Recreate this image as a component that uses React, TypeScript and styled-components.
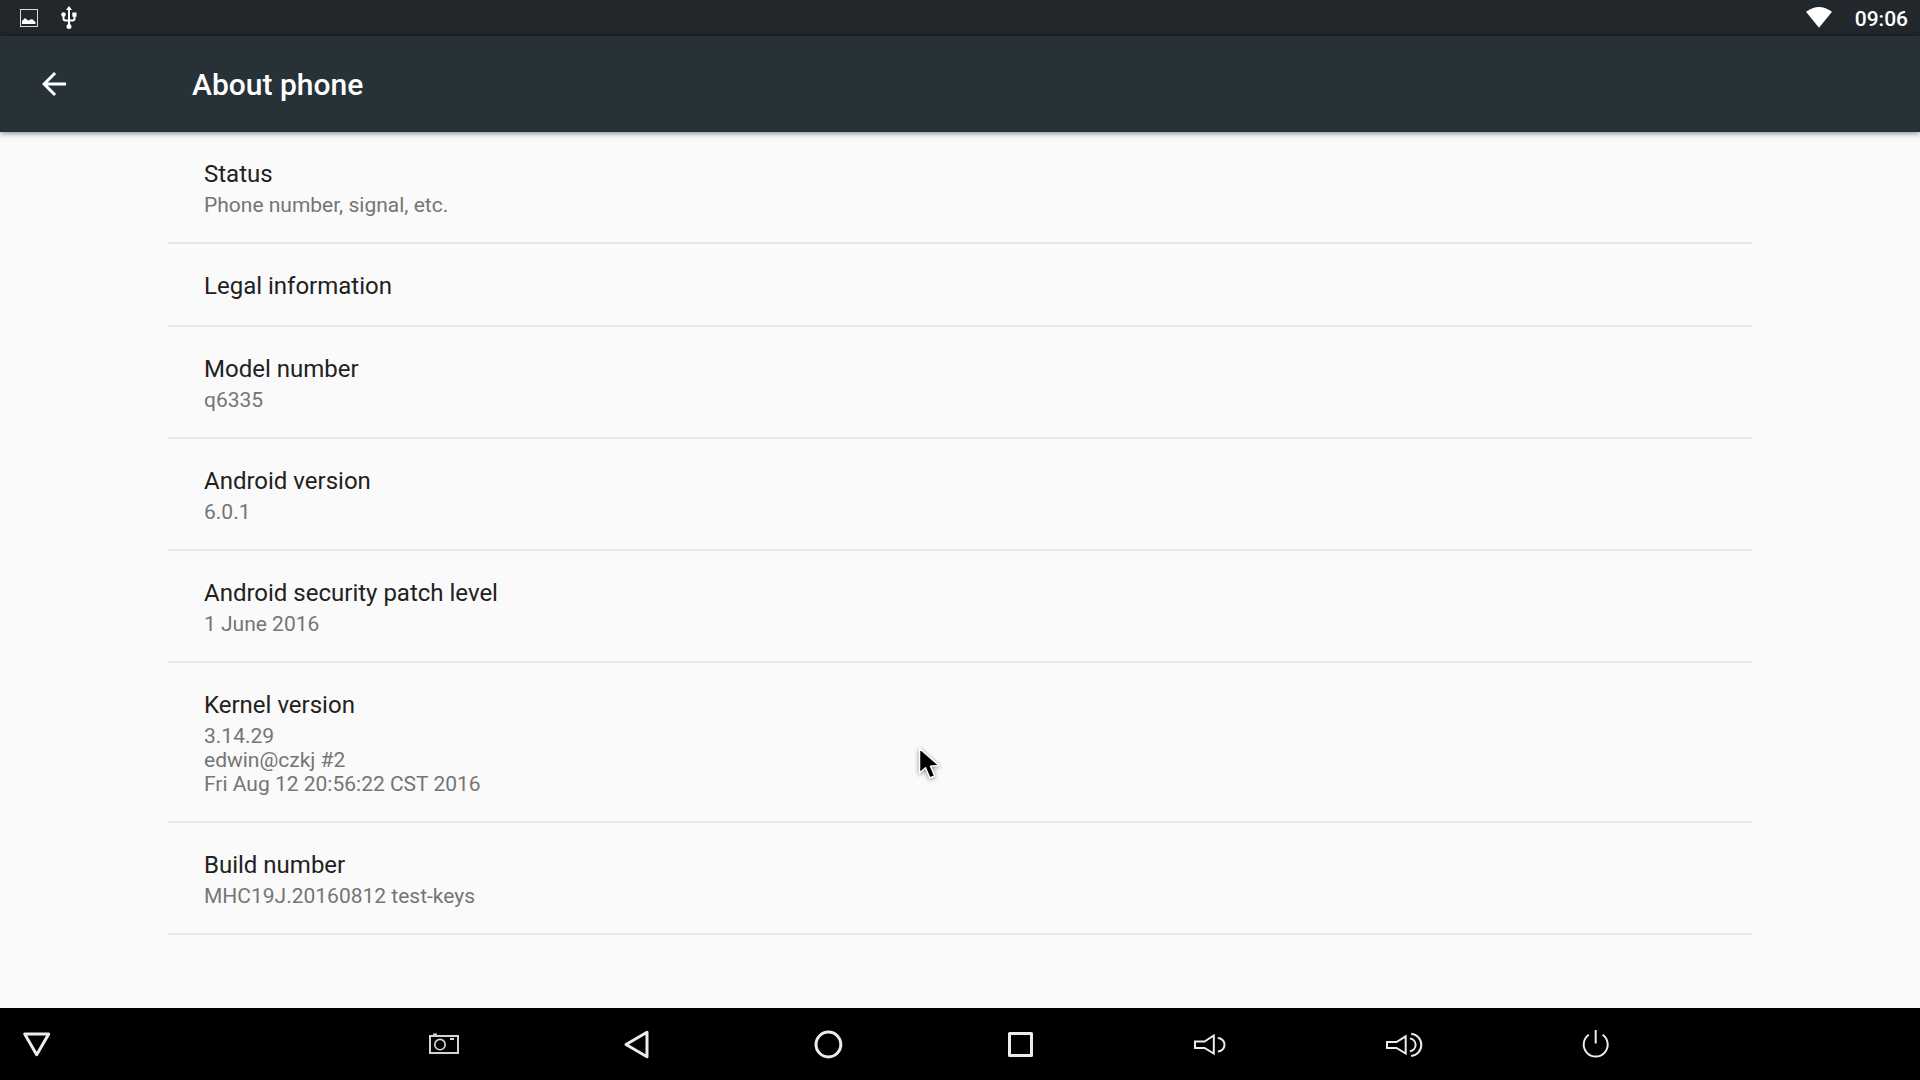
import React from "react";
import styled, { createGlobalStyle } from "styled-components";

const GlobalStyle = createGlobalStyle`
  *, *::before, *::after { box-sizing: border-box; }
  body {
    margin: 0;
    background: #fafafa;
    font-family: Roboto, "Noto Sans", sans-serif;
  }
  button {
    margin: 0;
    padding: 0;
    border: 0;
    background: none;
    font: inherit;
    color: inherit;
  }
  svg { display: block; }
`;

const Screen = styled.div`
  position: relative;
  display: flex;
  flex-direction: column;
  min-height: 100vh;
`;

const StatusBar = styled.div`
  display: flex;
  align-items: flex-start;
  justify-content: space-between;
  height: 36px;
  padding: 0 12px;
  background: #21272b;
  color: #fff;
`;

const StatusGroup = styled.div<{ $gap: number }>`
  display: flex;
  align-items: flex-start;
  gap: ${({ $gap }) => $gap}px;
`;

const Clock = styled.time`
  font-size: 21px;
  font-weight: 500;
  line-height: 38px;
`;

const AppBar = styled.header`
  z-index: 1;
  display: flex;
  align-items: center;
  height: 96px;
  padding-left: 24px;
  background: #273238;
  color: #fff;
  box-shadow: 0 1px 6px rgba(0, 0, 0, 0.5);
`;

const BackButton = styled.button`
  display: grid;
  place-items: center;
  width: 60px;
  height: 60px;
`;

const PageTitle = styled.h1`
  margin: 0 0 0 108px;
  font-size: 30px;
  font-weight: 500;
  line-height: 35px;
`;

const Content = styled.main`
  flex: 1;
  padding: 0 168px;
`;

const PreferenceList = styled.ul`
  margin: 0;
  padding: 0;
  list-style: none;
`;

const PreferenceItem = styled.li`
  border-bottom: 2px solid #dde8f3;
`;

const PreferenceButton = styled.button`
  display: flex;
  flex-direction: column;
  gap: 5px;
  width: 100%;
  padding: 28px 36px 25px;
  text-align: left;
`;

const PreferenceTitle = styled.span`
  color: #212121;
  font-size: 24px;
  line-height: 28px;
`;

const PreferenceSummary = styled.span`
  color: #757575;
  font-size: 21px;
  line-height: 24px;
  white-space: pre-line;
`;

const NavigationBar = styled.nav`
  display: flex;
  height: 72px;
  background: #000;
  color: #ececec;
`;

const NavigationGroup = styled.div`
  display: flex;
  flex: 1;
  justify-content: center;
  padding-left: 48px;
`;

const NavButton = styled.button<{ $width: number }>`
  display: grid;
  place-items: center;
  width: ${({ $width }) => $width}px;
  height: 72px;
`;

const Pointer = styled.svg`
  position: absolute;
  z-index: 2;
  left: 912px;
  top: 740px;
  pointer-events: none;
  filter: drop-shadow(0 1px 2px rgba(0, 0, 0, 0.45));
`;

const NavIcon = ({ children, stroke = 2 }: { children: React.ReactNode; stroke?: number }) => (
  <svg
    width="48"
    height="48"
    viewBox="0 0 48 48"
    fill="none"
    stroke="currentColor"
    strokeWidth={stroke}
    aria-hidden="true"
  >
    {children}
  </svg>
);

const preferences = [
  { title: "Status", summary: "Phone number, signal, etc." },
  { title: "Legal information" },
  { title: "Model number", summary: "q6335" },
  { title: "Android version", summary: "6.0.1" },
  { title: "Android security patch level", summary: "1 June 2016" },
  { title: "Kernel version", summary: "3.14.29\nedwin@czkj #2\nFri Aug 12 20:56:22 CST 2016" },
  { title: "Build number", summary: "MHC19J.20160812 test-keys" },
];

const navigation = [
  {
    label: "Screenshot",
    icon: (
      <NavIcon>
        <g stroke="#d4d4d4">
          <rect x="10" y="16" width="28" height="17" />
          <circle cx="20" cy="24.6" r="5.2" strokeWidth="1.6" />
          <path d="M13 14.5h4M30 19h4" />
        </g>
      </NavIcon>
    ),
  },
  {
    label: "Back",
    icon: (
      <NavIcon stroke={3}>
        <path d="M14 24.5 35 12.3v24.4Z" strokeLinejoin="round" />
      </NavIcon>
    ),
  },
  {
    label: "Home",
    icon: (
      <NavIcon stroke={3}>
        <circle cx="24.4" cy="24.5" r="12.4" />
      </NavIcon>
    ),
  },
  {
    label: "Recent apps",
    icon: (
      <NavIcon stroke={3}>
        <rect x="13.5" y="13.5" width="22" height="22" strokeLinejoin="round" />
      </NavIcon>
    ),
  },
  {
    label: "Volume down",
    icon: (
      <NavIcon>
        <path d="M7 21.5h9.5l9.3-6v18l-9.3-5.5H7Z" />
        <path d="M29.8 18a6.7 6.7 0 0 1 0 13.4" />
      </NavIcon>
    ),
  },
  {
    label: "Volume up",
    icon: (
      <NavIcon>
        <path d="M7 22h9.5l9.2-5.7v17.2L16.5 28H7Z" />
        <path d="M30 18.5a6.4 6.4 0 0 1 0 12.7M31.2 13.7a11.2 11.2 0 0 1 0 22.3" />
      </NavIcon>
    ),
  },
  {
    label: "Power",
    icon: (
      <NavIcon>
        <path d="M16.8 14.8a12 12 0 1 0 13.8 0M23.7 10v13.5" />
      </NavIcon>
    ),
  },
];

export default function App() {
  return (
    <Screen>
      <GlobalStyle />
      <StatusBar>
        <StatusGroup $gap={15}>
          <svg width="34" height="36" viewBox="0 0 34 36" aria-hidden="true">
            <rect x="8.5" y="9.5" width="17" height="17" fill="none" stroke="#d8dadb" />
            <path d="M10 24v-3l3-3 3 2.5 4-1.5 3.5 3v2Z" fill="#fff" />
          </svg>
          <svg width="16" height="36" viewBox="0 0 16 36" fill="none" stroke="#fff" strokeWidth="2" aria-hidden="true">
            <path d="M8 8v18M2.5 15v3.5q0 2 2 2h7q2 0 2-2V15" />
            <g fill="#fff" stroke="none">
              <path d="m8 6 3 4H5Z" />
              <circle cx="2.5" cy="14.5" r="2.3" />
              <path d="M11.3 12.5h4.2v4.2h-4.2Z" />
              <circle cx="8" cy="26.6" r="2.5" />
            </g>
          </svg>
        </StatusGroup>
        <StatusGroup $gap={22}>
          <svg width="28" height="36" viewBox="0 0 28 36" fill="#fff" aria-hidden="true">
            <path d="M1 11.8Q14 2.2 27 11.8L14 27.8Z" />
          </svg>
          <Clock>09:06</Clock>
        </StatusGroup>
      </StatusBar>
      <AppBar>
        <BackButton type="button" aria-label="Navigate up">
          <svg width="36" height="36" viewBox="0 0 24 24" fill="currentColor" aria-hidden="true">
            <path d="M20 11H7.83l5.59-5.59L12 4l-8 8 8 8 1.41-1.41L7.83 13H20v-2z" />
          </svg>
        </BackButton>
        <PageTitle>About phone</PageTitle>
      </AppBar>
      <Content>
        <PreferenceList>
          {preferences.map(({ title, summary }) => (
            <PreferenceItem key={title}>
              <PreferenceButton type="button">
                <PreferenceTitle>{title}</PreferenceTitle>
                {summary && <PreferenceSummary>{summary}</PreferenceSummary>}
              </PreferenceButton>
            </PreferenceItem>
          ))}
        </PreferenceList>
      </Content>
      <NavigationBar aria-label="System navigation">
        <NavButton type="button" $width={72} aria-label="Hide navigation bar">
          <NavIcon stroke={3}>
            <path d="M12.7 14h24L24.7 34.8Z" strokeLinejoin="round" />
          </NavIcon>
        </NavButton>
        <NavigationGroup>
          {navigation.map(({ label, icon }) => (
            <NavButton key={label} type="button" $width={192} aria-label={label}>
              {icon}
            </NavButton>
          ))}
        </NavigationGroup>
      </NavigationBar>
      <Pointer width="36" height="48" viewBox="0 0 36 48" aria-hidden="true">
        <path
          d="M7.5 8.5V33l6-5.2 4.3 10.2 4.9-2-4.2-9.7 8.5-.8Z"
          fill="#000"
          stroke="#fff"
          strokeWidth="1.5"
          strokeLinejoin="round"
        />
      </Pointer>
    </Screen>
  );
}
